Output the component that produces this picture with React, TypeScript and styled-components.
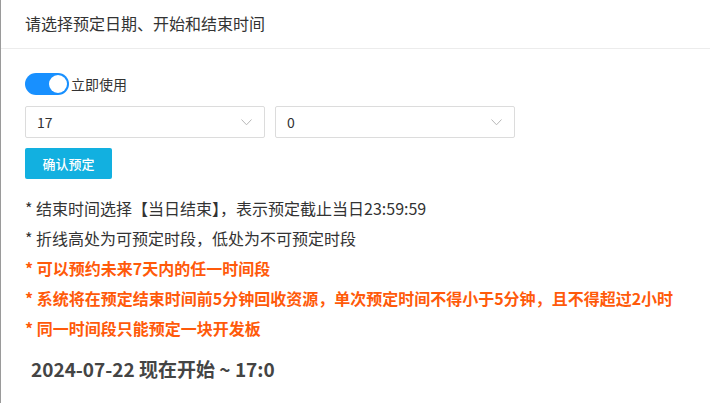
import React from "react";
import styled, { createGlobalStyle } from "styled-components";

const Global = createGlobalStyle`
  html, body { margin: 0; padding: 0; background: #fff; }
  body { font-family: "Noto Sans CJK SC", "Noto Sans", sans-serif; color: #333; }
  * { box-sizing: border-box; }
`;

const Page = styled.div`
  min-height: 403px;
  border-left: 1px solid #9a9a9a;
  background: #fff;
`;

const Header = styled.div`
  height: 49px;
  padding: 0 24px;
  display: flex;
  align-items: center;
  font-size: 16px;
  color: #333;
  border-bottom: 1px solid #ececec;
  padding-bottom: 2px;
`;

const Body = styled.div`
  padding: 24px 24px 0 24px;
  display: flex;
  flex-direction: column;
`;

const ToggleRow = styled.label`
  display: flex;
  align-items: center;
  height: 22px;
  font-size: 14px;
  color: #333;
  margin-bottom: 11px;
`;

const Switch = styled.span<{ $on: boolean }>`
  position: relative;
  width: 44px;
  height: 22px;
  border-radius: 11px;
  background: ${(p) => (p.$on ? "#1890ff" : "#ccc")};
  margin-right: 2px;
  flex: none;
`;

const Knob = styled.span<{ $on: boolean }>`
  position: absolute;
  top: 2px;
  left: ${(p) => (p.$on ? "24px" : "2px")};
  width: 18px;
  height: 18px;
  border-radius: 50%;
  background: #fff;
`;

const SelectRow = styled.div`
  display: flex;
  gap: 10px;
  margin-bottom: 10px;
`;

const Select = styled.div`
  width: 240px;
  height: 32px;
  border: 1px solid #dcdcdc;
  border-radius: 2px;
  display: flex;
  align-items: center;
  justify-content: space-between;
  padding: 0 12px 0 11px;
  font-size: 14px;
  color: #333;
`;

const Button = styled.button`
  width: 87px;
  height: 31px;
  border: none;
  border-radius: 2px;
  background: #12b0e0;
  color: #fff;
  font-family: "Noto Sans CJK SC", sans-serif;
  font-size: 13px;
  font-weight: 500;
  padding: 0;
  align-self: flex-start;
`;

const Notes = styled.div`
  margin-top: 14px;
  display: flex;
  flex-direction: column;
`;

const Note = styled.div<{ $warn?: boolean }>`
  height: 30px;
  line-height: 30px;
  font-size: 16px;
  white-space: nowrap;
  color: ${(p) => (p.$warn ? "#ff5a0a" : "#333")};
  font-weight: ${(p) => (p.$warn ? 700 : 400)};
`;

const DateLine = styled.div`
  margin-top: 11px;
  padding-left: 6px;
  height: 30px;
  line-height: 30px;
  font-size: 19px;
  font-weight: 700;
  color: #444;
  white-space: nowrap;
`;

const Chevron = () => (
  <svg width="11" height="7" viewBox="0 0 11 7" fill="none">
    <polyline points="0.5,0.5 5.5,5.8 10.5,0.5" stroke="#b8b8b8" strokeWidth="1" />
  </svg>
);

export default function App() {
  return (
    <Page>
      <Global />
      <Header>请选择预定日期、开始和结束时间</Header>
      <Body>
        <ToggleRow>
          <Switch $on>
            <Knob $on />
          </Switch>
          立即使用
        </ToggleRow>
        <SelectRow>
          <Select>
            <span>17</span>
            <Chevron />
          </Select>
          <Select>
            <span>0</span>
            <Chevron />
          </Select>
        </SelectRow>
        <Button>确认预定</Button>
        <Notes>
          <Note>* 结束时间选择【当日结束】，表示预定截止当日23:59:59</Note>
          <Note>* 折线高处为可预定时段，低处为不可预定时段</Note>
          <Note $warn>* 可以预约未来7天内的任一时间段</Note>
          <Note $warn>* 系统将在预定结束时间前5分钟回收资源，单次预定时间不得小于5分钟，且不得超过2小时</Note>
          <Note $warn>* 同一时间段只能预定一块开发板</Note>
        </Notes>
        <DateLine>2024-07-22 现在开始 ~ 17:0</DateLine>
      </Body>
    </Page>
  );
}
